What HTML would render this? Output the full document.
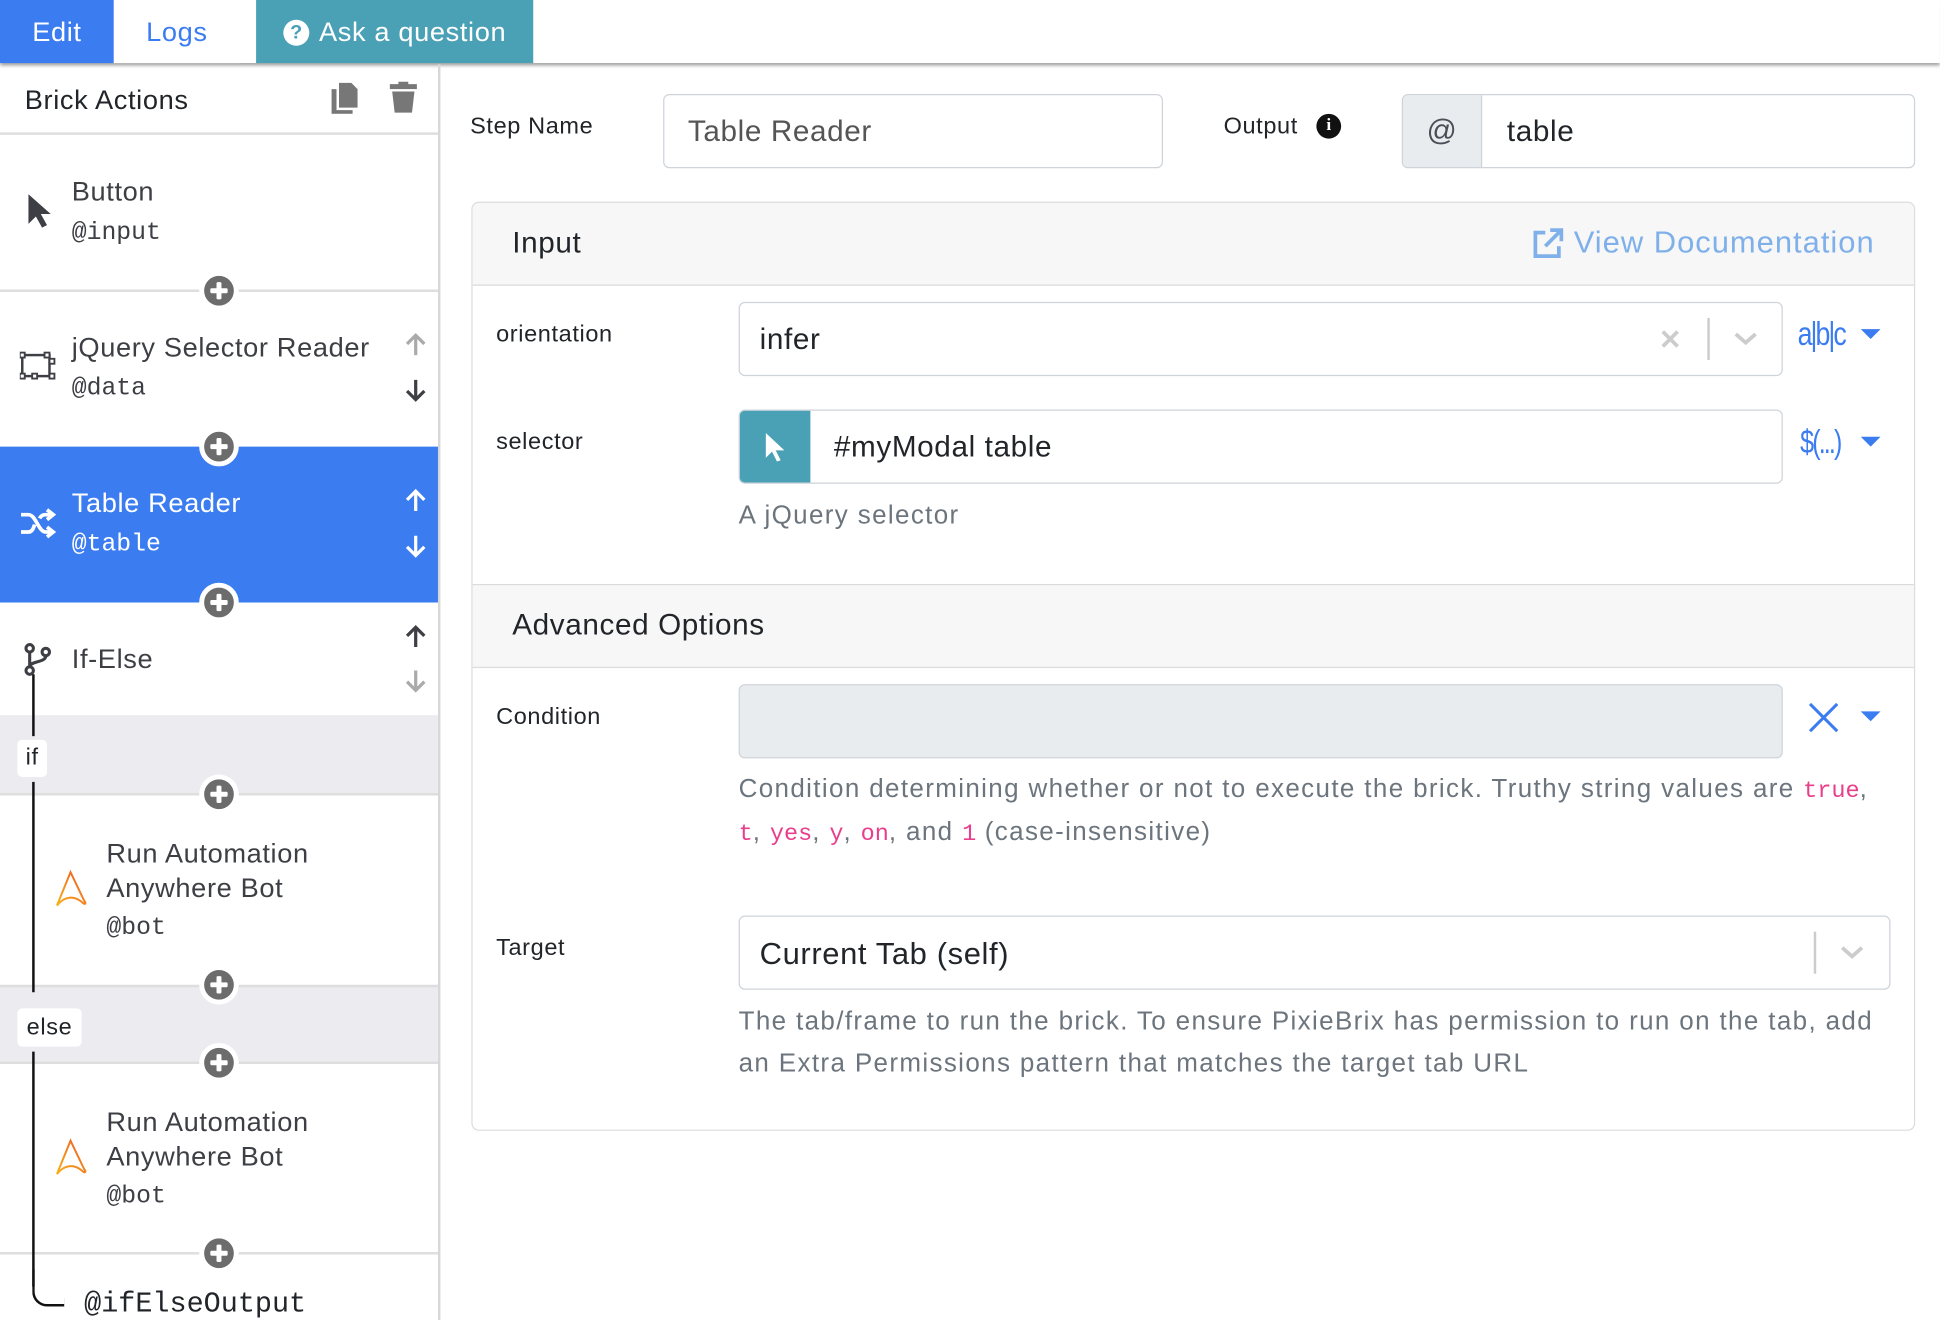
<!DOCTYPE html>
<html><head><meta charset="utf-8"><style>
html,body{margin:0;padding:0;width:1940px;height:1320px;overflow:hidden;background:#fff}
#w{position:absolute;left:0;top:0;width:1568px;height:1067px;transform:scale(1.2372);transform-origin:0 0;font-family:"Liberation Sans",sans-serif;color:#212529;letter-spacing:0.5px}
.a{position:absolute}
.mono{font-family:"Liberation Mono",monospace;letter-spacing:0}
.t{font-size:22px;color:#3d3f44;white-space:nowrap}
.sub{font-size:20px;color:#3d3f44}
.hl{position:absolute;left:0;width:354px;height:2px;background:#dedede}
.plus{position:absolute;width:24px;height:24px;border-radius:50%;background:#6c6c6c;border:4px solid #fff;margin:-16px 0 0 -16px}
.plus:before{content:"";position:absolute;left:5px;top:10px;width:14px;height:4px;background:#fff;border-radius:1px}
.plus:after{content:"";position:absolute;left:10px;top:5px;width:4px;height:14px;background:#fff;border-radius:1px}
.lbl{font-size:19px;color:#212529}
.inp{position:absolute;border:1.5px solid #ced4da;border-radius:5px;box-sizing:border-box;background:#fff}
.help{font-size:21px;color:#6c757d;line-height:34px;letter-spacing:1.1px}
code{font-family:"Liberation Mono",monospace;color:#e83e8c;font-size:19px;letter-spacing:0}
.caret{position:absolute;width:0;height:0;border-left:8px solid transparent;border-right:8px solid transparent;border-top:8px solid #3b7cf0}
</style></head><body><div id="w">
<div class="a" style="left:0;top:0;width:1568px;height:51px;box-shadow:0 2px 3px rgba(0,0,0,.45);background:#fff"></div>
<div class="a" style="left:0;top:0;width:92px;height:51px;background:#3b7cf0;color:#fff;font-size:22px;line-height:51px;text-align:center">Edit</div>
<div class="a" style="left:92px;top:0;width:102px;height:51px;background:#fff;color:#3b7cf0;font-size:22px;line-height:51px;text-align:center">Logs</div>
<div class="a" style="left:207px;top:0;width:224px;height:51px;background:#4aa0b5;color:#fff;font-size:22px;line-height:51px;text-align:center"><span style="display:inline-block;width:21px;height:21px;border-radius:50%;background:#fff;color:#4aa0b5;font-size:16px;line-height:21px;font-weight:bold;vertical-align:2px;margin-right:8px;letter-spacing:0">?</span>Ask a question</div>
<div class="a" style="left:354px;top:52px;width:2px;height:1015px;background:#d8d8d8"></div>
<div class="a" style="left:20px;top:68px;font-size:22px;color:#212529">Brick Actions</div>
<svg class="a" style="left:266px;top:66px" width="26" height="26" viewBox="0 0 26 26"><path d="M8 1h10l5 5v15H8z" fill="#777"/><path d="M2 6h4v17h13v3H2z" fill="#777"/></svg>
<svg class="a" style="left:315px;top:66px" width="22" height="26" viewBox="0 0 22 26"><rect x="0" y="2" width="22" height="4" fill="#777"/><rect x="7" y="0" width="8" height="3" fill="#777"/><path d="M2 8h18l-2 17H4z" fill="#777"/></svg>
<div class="hl" style="top:107px"></div>
<svg class="a" style="left:22px;top:156px" width="20" height="30" viewBox="0 0 20 30"><path d="M1 1v24l6-6 5 9 4-2-5-9h8z" fill="#3d3f44"/></svg>
<div class="a t" style="left:58px;top:142px">Button</div>
<div class="a sub mono" style="left:58px;top:177px">@input</div>
<div class="hl" style="top:234px"></div>
<svg class="a" style="left:16px;top:284px" width="30" height="26" viewBox="0 0 30 26"><rect x="2" y="3" width="22" height="17" fill="none" stroke="#3d3f44" stroke-width="2"/><g fill="#fff" stroke="#3d3f44" stroke-width="1.5"><rect x="0" y="1" width="4" height="4"/><rect x="20" y="1" width="4" height="4"/><rect x="0" y="18" width="4" height="4"/><rect x="10" y="18" width="4" height="4"/><rect x="24" y="6" width="4" height="4"/><rect x="24" y="18" width="4" height="4"/></g></svg>
<div class="a t" style="left:58px;top:268px">jQuery Selector Reader</div>
<div class="a sub mono" style="left:58px;top:303px">@data</div>
<svg class="a" style="left:326px;top:268px" width="20" height="20" viewBox="0 0 20 20"><path d="M10 19V3M3 10l7-7 7 7" fill="none" stroke="#aaa" stroke-width="2.6"/></svg>
<svg class="a" style="left:326px;top:306px" width="20" height="20" viewBox="0 0 20 20"><path d="M10 1v16M3 10l7 7 7-7" fill="none" stroke="#3d3f44" stroke-width="2.6"/></svg>
<div class="a" style="left:0;top:361px;width:354px;height:126px;background:#3b7cf0"></div>
<svg class="a" style="left:16px;top:410px" width="30" height="26" viewBox="0 0 30 26"><path d="M1 6h6c6 0 8 14 14 14h5M1 20h6c3 0 4-3 5-6M16 9c1-2 3-3 5-3h5M22 2l5 4-5 4M22 16l5 4-5 4" fill="none" stroke="#fff" stroke-width="3"/></svg>
<div class="a t" style="left:58px;top:394px;color:#fff">Table Reader</div>
<div class="a sub mono" style="left:58px;top:429px;color:#fff">@table</div>
<svg class="a" style="left:326px;top:394px" width="20" height="20" viewBox="0 0 20 20"><path d="M10 19V3M3 10l7-7 7 7" fill="none" stroke="#fff" stroke-width="2.6"/></svg>
<svg class="a" style="left:326px;top:432px" width="20" height="20" viewBox="0 0 20 20"><path d="M10 1v16M3 10l7 7 7-7" fill="none" stroke="#fff" stroke-width="2.6"/></svg>
<svg class="a" style="left:18px;top:519px" width="26" height="28" viewBox="0 0 26 28"><circle cx="6" cy="5" r="3" fill="none" stroke="#3d3f44" stroke-width="2.5"/><circle cx="19" cy="8" r="3" fill="none" stroke="#3d3f44" stroke-width="2.5"/><circle cx="6" cy="23" r="3" fill="none" stroke="#3d3f44" stroke-width="2.5"/><path d="M6 8v12M19 11c0 6-13 4-13 9" fill="none" stroke="#3d3f44" stroke-width="2.5"/></svg>
<div class="a t" style="left:58px;top:520px">If-Else</div>
<svg class="a" style="left:326px;top:504px" width="20" height="20" viewBox="0 0 20 20"><path d="M10 19V3M3 10l7-7 7 7" fill="none" stroke="#3d3f44" stroke-width="2.6"/></svg>
<svg class="a" style="left:326px;top:541px" width="20" height="20" viewBox="0 0 20 20"><path d="M10 1v16M3 10l7 7 7-7" fill="none" stroke="#aaa" stroke-width="2.6"/></svg>
<div class="a" style="left:0;top:578px;width:354px;height:63px;background:#ebebf0"></div>
<div class="hl" style="top:641px"></div>
<div class="a" style="left:0;top:796px;width:354px;height:62px;background:#ebebf0;border-top:2px solid #dedede"></div>
<div class="hl" style="top:858px"></div>
<div class="hl" style="top:1012px"></div>
<div class="a" style="left:26px;top:545px;width:2px;height:50px;background:#111"></div>
<div class="a" style="left:26px;top:632px;width:2px;height:170px;background:#111"></div>
<div class="a" style="left:26px;top:850px;width:2px;height:190px;background:#111"></div>
<div class="a" style="left:26px;top:1026px;width:24px;height:28px;border-left:2px solid #111;border-bottom:2px solid #111;border-bottom-left-radius:12px"></div>
<div class="a" style="left:14px;top:598px;width:24px;height:30px;background:#fff;border-radius:4px;font-size:19px;line-height:30px;text-align:center">if</div>
<div class="a" style="left:14px;top:815px;width:52px;height:31px;background:#fff;border-radius:4px;font-size:19px;line-height:31px;text-align:center">else</div>
<svg class="a" style="left:44px;top:702px" width="30" height="32" viewBox="0 0 30 32"><defs><linearGradient id="g" x1="0" y1="1" x2="1" y2="0"><stop offset="0" stop-color="#f7b21b"/><stop offset="1" stop-color="#ee5a24"/></linearGradient></defs><path d="M2 30L13 3l12 25M2 30c6-8 14-8 20-3 3 3 4 1 2-1" fill="none" stroke="url(#g)" stroke-width="1.6"/></svg>
<div class="a t" style="left:86px;top:676px;line-height:28px">Run Automation<br>Anywhere Bot</div>
<div class="a sub mono" style="left:86px;top:739px">@bot</div>
<svg class="a" style="left:44px;top:919px" width="30" height="32" viewBox="0 0 30 32"><path d="M2 30L13 3l12 25M2 30c6-8 14-8 20-3 3 3 4 1 2-1" fill="none" stroke="url(#g)" stroke-width="1.6"/></svg>
<div class="a t" style="left:86px;top:893px;line-height:28px">Run Automation<br>Anywhere Bot</div>
<div class="a sub mono" style="left:86px;top:956px">@bot</div>
<div class="a mono" style="left:68px;top:1041px;font-size:23px;color:#212529">@ifElseOutput</div>
<div class="plus" style="left:177px;top:235px"></div>
<div class="plus" style="left:177px;top:361px"></div>
<div class="plus" style="left:177px;top:487px"></div>
<div class="plus" style="left:177px;top:642px"></div>
<div class="plus" style="left:177px;top:796px"></div>
<div class="plus" style="left:177px;top:859px"></div>
<div class="plus" style="left:177px;top:1013px"></div>
<div class="a lbl" style="left:380px;top:92px">Step Name</div>
<div class="inp" style="left:536px;top:76px;width:404px;height:60px"><span class="a" style="left:19px;top:16px;font-size:24px;color:#555">Table Reader</span></div>
<div class="a lbl" style="left:989px;top:92px">Output</div>
<div class="a" style="left:1064px;top:92px;width:20px;height:20px;border-radius:50%;background:#111;color:#fff;font-size:14px;font-weight:bold;text-align:center;line-height:20px;font-family:'Liberation Serif',serif;letter-spacing:0">i</div>
<div class="inp" style="left:1133px;top:76px;width:415px;height:60px;overflow:hidden"><div class="a" style="left:0;top:0;width:63px;height:58px;background:#e9ecef;border-right:1.5px solid #ced4da;font-size:24px;color:#495057;text-align:center;line-height:58px">@</div><span class="a" style="left:84px;top:16px;font-size:24px;color:#212529">table</span></div>
<div class="a" style="left:381px;top:163px;width:1167px;height:751px;border:1.5px solid #dcdcdc;border-radius:6px;box-sizing:border-box;overflow:hidden">
 <div class="a" style="left:0;top:0;width:100%;height:66px;background:#f7f7f7;border-bottom:1.5px solid #dcdcdc"></div>
 <div class="a" style="left:0;top:308px;width:100%;height:66px;background:#f7f7f7;border-top:1.5px solid #dcdcdc;border-bottom:1.5px solid #dcdcdc"></div>
</div>
<div class="a" style="left:414px;top:183px;font-size:24px">Input</div>
<svg class="a" style="left:1238px;top:184px" width="26" height="26" viewBox="0 0 26 26"><path d="M11 4H3v19h19v-8" fill="none" stroke="#7fb0ea" stroke-width="3"/><path d="M15 2h9v9M24 2L11 15" fill="none" stroke="#7fb0ea" stroke-width="3"/></svg>
<div class="a" style="left:1272px;top:182px;font-size:25px;color:#7fb0ea;letter-spacing:0.8px">View Documentation</div>
<div class="a lbl" style="left:401px;top:260px">orientation</div>
<div class="inp" style="left:597px;top:244px;width:844px;height:60px"><span class="a" style="left:16px;top:16px;font-size:24px">infer</span>
<svg class="a" style="left:744px;top:21px" width="16" height="16" viewBox="0 0 16 16"><path d="M2 2l12 12M14 2L2 14" stroke="#ccc" stroke-width="3"/></svg>
<div class="a" style="left:782px;top:12px;width:1.5px;height:34px;background:#ccc"></div>
<svg class="a" style="left:803px;top:23px" width="20" height="12" viewBox="0 0 20 12"><path d="M2 2l8 7 8-7" fill="none" stroke="#ccc" stroke-width="3"/></svg></div>
<div class="a" style="left:1453px;top:255px;font-size:27px;color:#3b7cf0;letter-spacing:-2px;transform:scaleX(.8);transform-origin:0 0">a|b|c</div>
<div class="caret" style="left:1504px;top:266px"></div>
<div class="a lbl" style="left:401px;top:347px">selector</div>
<div class="inp" style="left:597px;top:331px;width:844px;height:60px;overflow:hidden"><div class="a" style="left:-1px;top:-1px;width:58px;height:60px;background:#4aa0b5"></div>
<svg class="a" style="left:20px;top:17px" width="18" height="26" viewBox="0 0 18 26"><path d="M1 1v20l5-5 4 8 3-1-4-8h7z" fill="#fff"/></svg>
<span class="a" style="left:76px;top:16px;font-size:24px">#myModal table</span></div>
<div class="a" style="left:1455px;top:342px;font-size:27px;color:#3b7cf0;letter-spacing:-2px;transform:scaleX(.75);transform-origin:0 0">$(...)</div>
<div class="caret" style="left:1504px;top:353px"></div>
<div class="a help" style="left:597px;top:400px">A jQuery selector</div>
<div class="a" style="left:414px;top:492px;font-size:24px">Advanced Options</div>
<div class="a lbl" style="left:401px;top:569px">Condition</div>
<div class="inp" style="left:597px;top:553px;width:844px;height:60px;background:#e9ecef"></div>
<svg class="a" style="left:1461px;top:567px" width="26" height="26" viewBox="0 0 26 26"><path d="M2 2l22 22M24 2L2 24" stroke="#3b7cf0" stroke-width="2.5"/></svg>
<div class="caret" style="left:1504px;top:575px"></div>
<div class="a help" style="left:597px;top:621px;width:935px">Condition determining whether or not to execute the brick. Truthy string values are <code>true</code>, <code>t</code>, <code>yes</code>, <code>y</code>, <code>on</code>, and <code>1</code> (case-insensitive)</div>
<div class="a lbl" style="left:401px;top:756px">Target</div>
<div class="inp" style="left:597px;top:740px;width:931px;height:60px"><span class="a" style="left:16px;top:16px;font-size:25px">Current Tab (self)</span>
<div class="a" style="left:868px;top:12px;width:1.5px;height:34px;background:#ccc"></div>
<svg class="a" style="left:889px;top:23px" width="20" height="12" viewBox="0 0 20 12"><path d="M2 2l8 7 8-7" fill="none" stroke="#ccc" stroke-width="3"/></svg></div>
<div class="a help" style="left:597px;top:809px;width:925px">The tab/frame to run the brick. To ensure PixieBrix has permission to run on the tab, add an Extra Permissions pattern that matches the target tab URL</div>
</div></body></html>
